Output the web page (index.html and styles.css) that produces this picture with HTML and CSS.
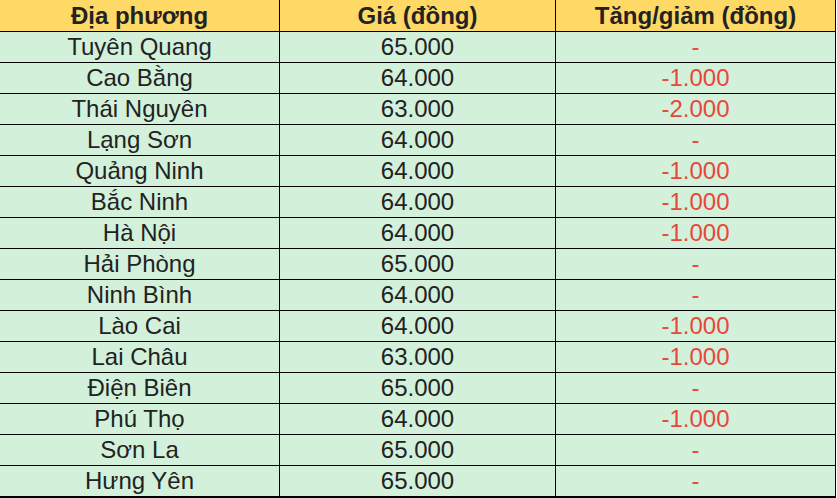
FILE: index.html
```html
<!DOCTYPE html>
<html lang="vi">
<head>
<meta charset="utf-8">
<link rel="stylesheet" href="styles.css">
</head>
<body>
<table class="price-table">
  <colgroup>
    <col class="c1"><col class="c2"><col class="c3">
  </colgroup>
  <thead>
    <tr><th>Địa phương</th><th>Giá (đồng)</th><th>Tăng/giảm (đồng)</th></tr>
  </thead>
  <tbody>
    <tr><td>Tuyên Quang</td><td>65.000</td><td class="chg">-</td></tr>
    <tr><td>Cao Bằng</td><td>64.000</td><td class="chg">-1.000</td></tr>
    <tr><td>Thái Nguyên</td><td>63.000</td><td class="chg">-2.000</td></tr>
    <tr><td>Lạng Sơn</td><td>64.000</td><td class="chg">-</td></tr>
    <tr><td>Quảng Ninh</td><td>64.000</td><td class="chg">-1.000</td></tr>
    <tr><td>Bắc Ninh</td><td>64.000</td><td class="chg">-1.000</td></tr>
    <tr><td>Hà Nội</td><td>64.000</td><td class="chg">-1.000</td></tr>
    <tr><td>Hải Phòng</td><td>65.000</td><td class="chg">-</td></tr>
    <tr><td>Ninh Bình</td><td>64.000</td><td class="chg">-</td></tr>
    <tr><td>Lào Cai</td><td>64.000</td><td class="chg">-1.000</td></tr>
    <tr><td>Lai Châu</td><td>63.000</td><td class="chg">-1.000</td></tr>
    <tr><td>Điện Biên</td><td>65.000</td><td class="chg">-</td></tr>
    <tr><td>Phú Thọ</td><td>64.000</td><td class="chg">-1.000</td></tr>
    <tr><td>Sơn La</td><td>65.000</td><td class="chg">-</td></tr>
    <tr><td>Hưng Yên</td><td>65.000</td><td class="chg">-</td></tr>
  </tbody>
</table>
</body>
</html>
```
FILE: styles.css
```css
html, body {
  margin: 0;
  padding: 0;
  background: #ffffff;
}
.price-table {
  border-collapse: separate;
  border-spacing: 0;
  table-layout: fixed;
  width: 836px;
  font-family: "Liberation Sans", Arial, sans-serif;
  font-size: 24px;
  color: #222222;
}
.c1 { width: 280px; }
.c2 { width: 276px; }
.c3 { width: 280px; }
.price-table th,
.price-table td {
  padding: 0;
  text-align: center;
  border-right: 1px solid #000;
  border-bottom: 1px solid #000;
  white-space: nowrap;
  line-height: 30px;
  height: 30px;
}
.price-table th {
  background: #ffd966;
  font-weight: bold;
  height: 31px;
  line-height: 31px;
}
.price-table td {
  background: #d3f0da;
}
.price-table tbody tr:last-child td {
  border-bottom-width: 2px;
}
.price-table td.chg {
  color: #e8473b;
}
```
